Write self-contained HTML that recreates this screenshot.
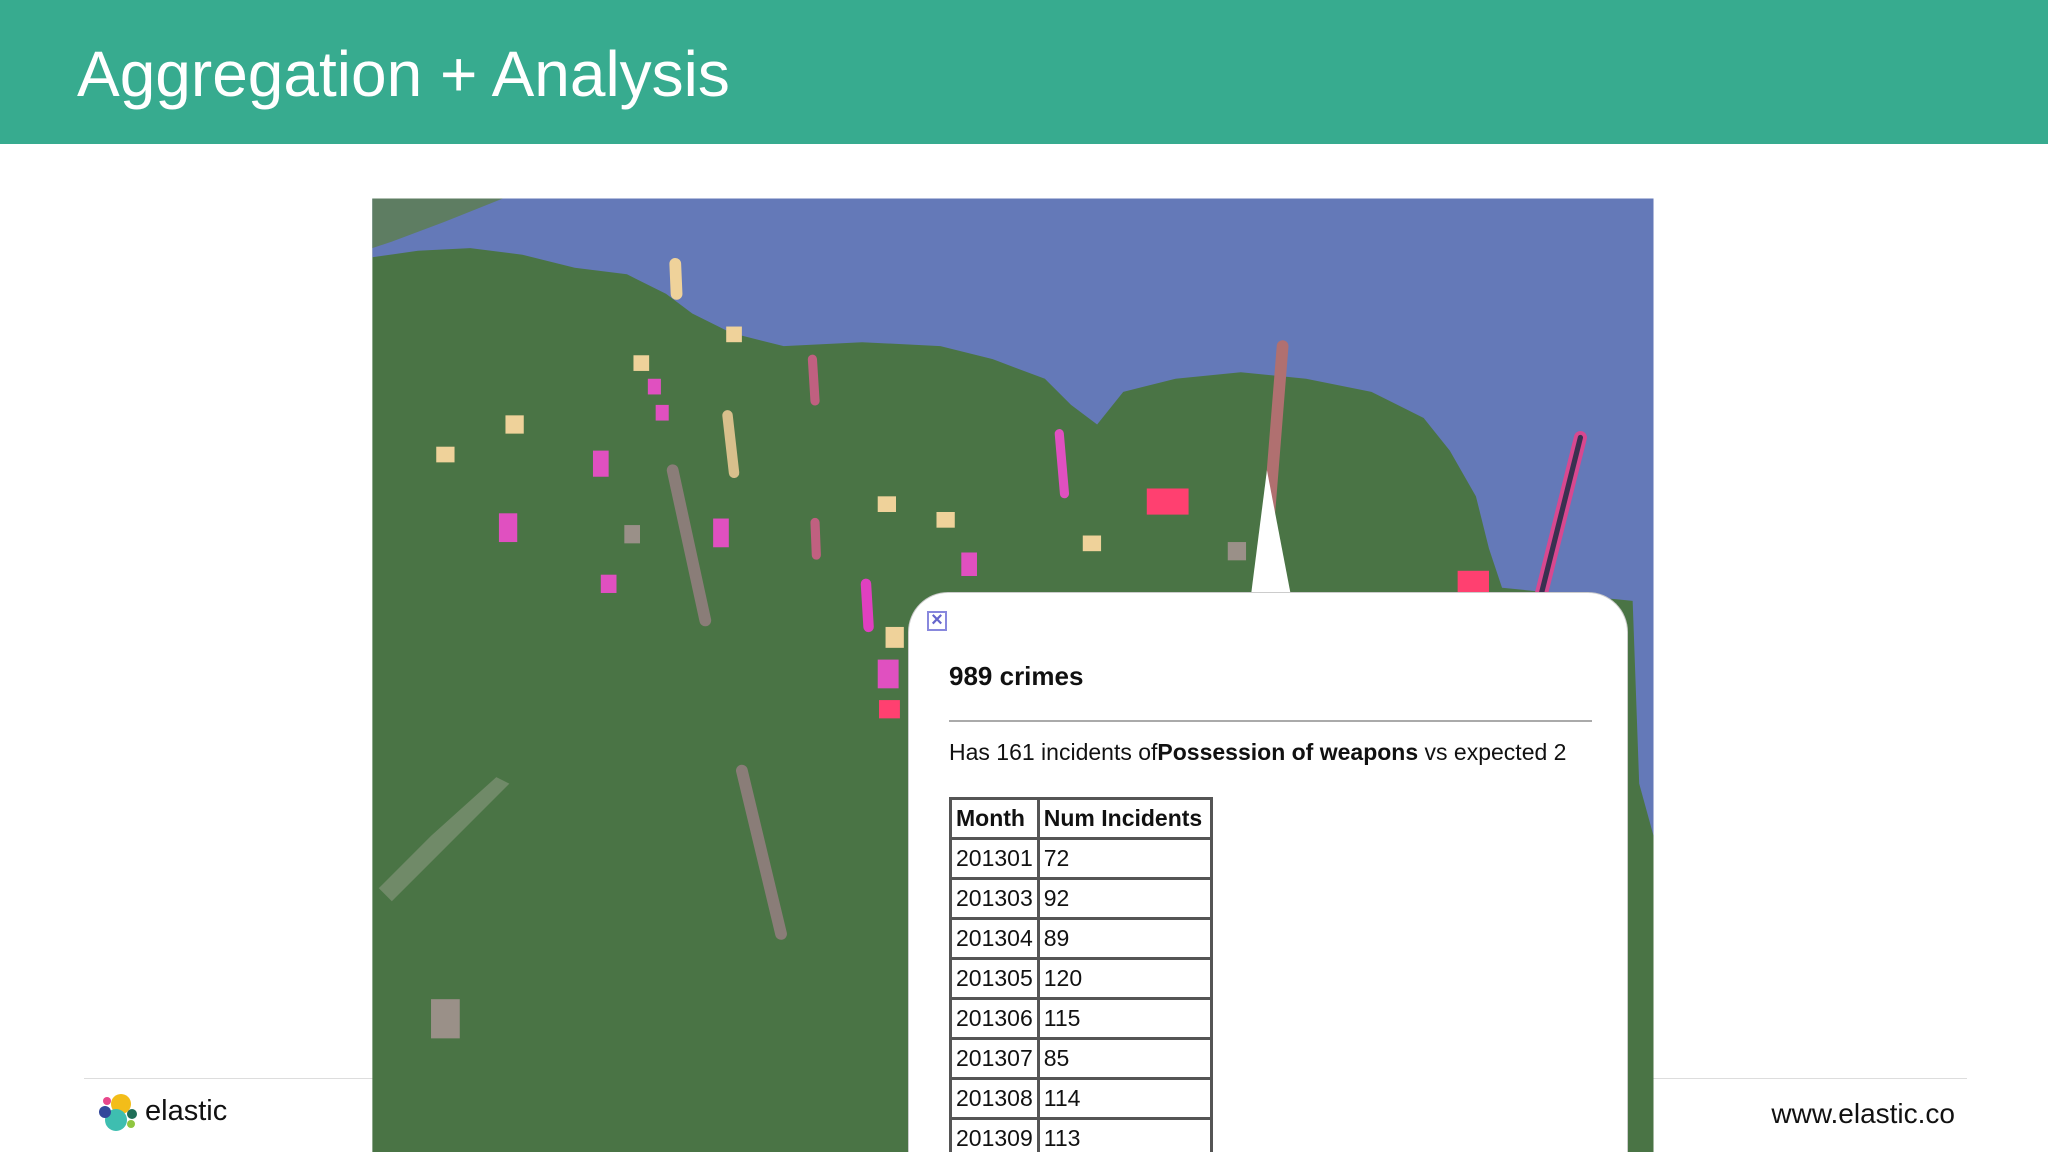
<!DOCTYPE html>
<html style="overflow:hidden"><head><meta charset="utf-8"><style>
html,body{margin:0;width:2048px;height:1152px;overflow:hidden}
body{background:#fff;font-family:"Liberation Sans",sans-serif;position:relative}
.hdr{position:absolute;left:0;top:0;width:2048px;height:144px;background:#37ab8f}
.hdr h1{margin:0;position:absolute;left:77px;top:38px;font-weight:normal;color:#fff;font-size:64px;line-height:72px}
svg.map{position:absolute;left:0;top:0}
.pop{position:absolute;left:908px;top:592px;width:718px;height:560px;background:#fff;border-radius:40px 40px 0 0;border:1px solid #ccc;border-bottom:none;overflow:hidden}
.x{position:absolute;left:18px;top:18px;width:20px;height:20px;border:2px solid #8888dd;box-sizing:border-box;color:#6666cc;font-size:20px;line-height:15px;text-align:center;font-weight:bold}
.t1{position:absolute;left:40px;top:68px;font-size:26px;font-weight:bold;color:#111}
.hr{position:absolute;left:40px;top:127px;width:643px;height:2px;background:#aaa}
.t2{position:absolute;left:40px;top:146px;font-size:23px;color:#111;white-space:nowrap}
table{position:absolute;left:40px;top:204px;border-collapse:collapse;border:3px solid #444;font-size:23px;color:#111}
td,th{border:3px solid #555;height:37px;padding:0 4px;line-height:37px}
td:first-child{width:76px}td:last-child{width:162px}
th{text-align:left}
.fl{position:absolute;left:84px;top:1078px;width:1883px;height:1px;background:#ddd}
.el{position:absolute;left:145px;top:1095px;font-size:29px;color:#111}
.ww{position:absolute;right:93px;top:1098px;font-size:28px;color:#111}
</style></head><body>
<div class="hdr"><h1>Aggregation + Analysis</h1></div>
<div class="fl"></div>
<svg style="position:absolute;left:98px;top:1092px" width="40" height="40" viewBox="0 0 40 40">
<circle cx="23" cy="12" r="10" fill="#f3bd19"/><circle cx="18" cy="28" r="11" fill="#3ebeb0"/><circle cx="7" cy="20" r="6" fill="#33489b"/><circle cx="9" cy="9" r="4" fill="#e8478b"/><circle cx="34" cy="22" r="5" fill="#1f6e58"/><circle cx="33" cy="32" r="4" fill="#8fc640"/></svg>
<div class="el">elastic</div>
<div class="ww">www.elastic.co</div>
<svg class="map" width="2048" height="1152" viewBox="0 0 1568 882">
<defs><clipPath id="c"><rect x="285" y="152" width="981" height="730"/></clipPath></defs>
<g clip-path="url(#c)">
<rect x="285" y="152" width="981" height="730" fill="#4a7445"/>
<path d="M285,152 L1266,152 L1266,640 L1255,600 L1250,460 L1150,450 L1140,420 L1130,380 L1110,345 L1090,320 L1050,300 L1000,290 L950,285 L900,290 L860,300 L840,325 L820,310 L800,290 L760,275 L720,265 L660,262 L600,265 L560,255 L530,240 L510,225 L480,210 L440,205 L400,195 L360,190 L320,192 L285,197 Z" fill="#6479b8"/>
<path d="M285,152 L385,152 L340,170 L300,185 L285,190 Z" fill="#5e7d62"/>
<path d="M290,680 L330,640 L380,595 L390,600 L340,650 L300,690 Z" fill="#8a9a80" opacity=".6"/>
<g stroke-linecap="round" fill="none">
<line x1="518" y1="225" x2="517" y2="202" stroke="#efd29a" stroke-width="9"/>
<line x1="624" y1="307" x2="622" y2="275" stroke="#c06080" stroke-width="7"/>
<line x1="562" y1="362" x2="557" y2="318" stroke="#d8c08c" stroke-width="8"/>
<line x1="540" y1="475" x2="515" y2="360" stroke="#8a7d78" stroke-width="9"/>
<line x1="598" y1="715" x2="568" y2="590" stroke="#8a7d78" stroke-width="9"/>
<line x1="815" y1="378" x2="811" y2="332" stroke="#e050c0" stroke-width="7"/>
<line x1="968" y1="440" x2="982" y2="265" stroke="#b07070" stroke-width="9"/>
<line x1="1180" y1="455" x2="1210" y2="335" stroke="#d84890" stroke-width="10"/>
<line x1="1180" y1="455" x2="1210" y2="335" stroke="#3a3050" stroke-width="4"/>
<line x1="665" y1="480" x2="663" y2="447" stroke="#e040c0" stroke-width="8"/>
<line x1="625" y1="425" x2="624" y2="400" stroke="#c06080" stroke-width="7"/>
</g>
<g fill="#e050c0"><rect x="382" y="393" width="14" height="22"/><rect x="454" y="345" width="12" height="20"/><rect x="546" y="397" width="12" height="22"/><rect x="736" y="423" width="12" height="18"/><rect x="496" y="290" width="10" height="12"/><rect x="502" y="310" width="10" height="12"/><rect x="460" y="440" width="12" height="14"/><rect x="672" y="505" width="16" height="22"/></g>
<g fill="#ff4070"><rect x="878" y="374" width="32" height="20"/><rect x="1116" y="437" width="24" height="18"/><rect x="673" y="536" width="16" height="14"/></g>
<g fill="#efd29a"><rect x="672" y="380" width="14" height="12"/><rect x="717" y="392" width="14" height="12"/><rect x="829" y="410" width="14" height="12"/><rect x="334" y="342" width="14" height="12"/><rect x="387" y="318" width="14" height="14"/><rect x="556" y="250" width="12" height="12"/><rect x="485" y="272" width="12" height="12"/><rect x="678" y="480" width="14" height="16"/></g>
<g fill="#9a9088"><rect x="478" y="402" width="12" height="14"/><rect x="330" y="765" width="22" height="30"/><rect x="940" y="415" width="14" height="14"/></g>
<path d="M958,454 L970,360 L988,454 Z" fill="#fff"/>
</g>
</svg>
<div class="pop">
<div class="x">×</div>
<div class="t1">989 crimes</div>
<div class="hr"></div>
<div class="t2">Has 161 incidents of<b>Possession of weapons</b> vs expected 2</div>
<table>
<tr><th>Month</th><th>Num Incidents</th></tr>
<tr><td>201301</td><td>72</td></tr>
<tr><td>201303</td><td>92</td></tr>
<tr><td>201304</td><td>89</td></tr>
<tr><td>201305</td><td>120</td></tr>
<tr><td>201306</td><td>115</td></tr>
<tr><td>201307</td><td>85</td></tr>
<tr><td>201308</td><td>114</td></tr>
<tr><td>201309</td><td>113</td></tr>
</table>
</div>
</body></html>
